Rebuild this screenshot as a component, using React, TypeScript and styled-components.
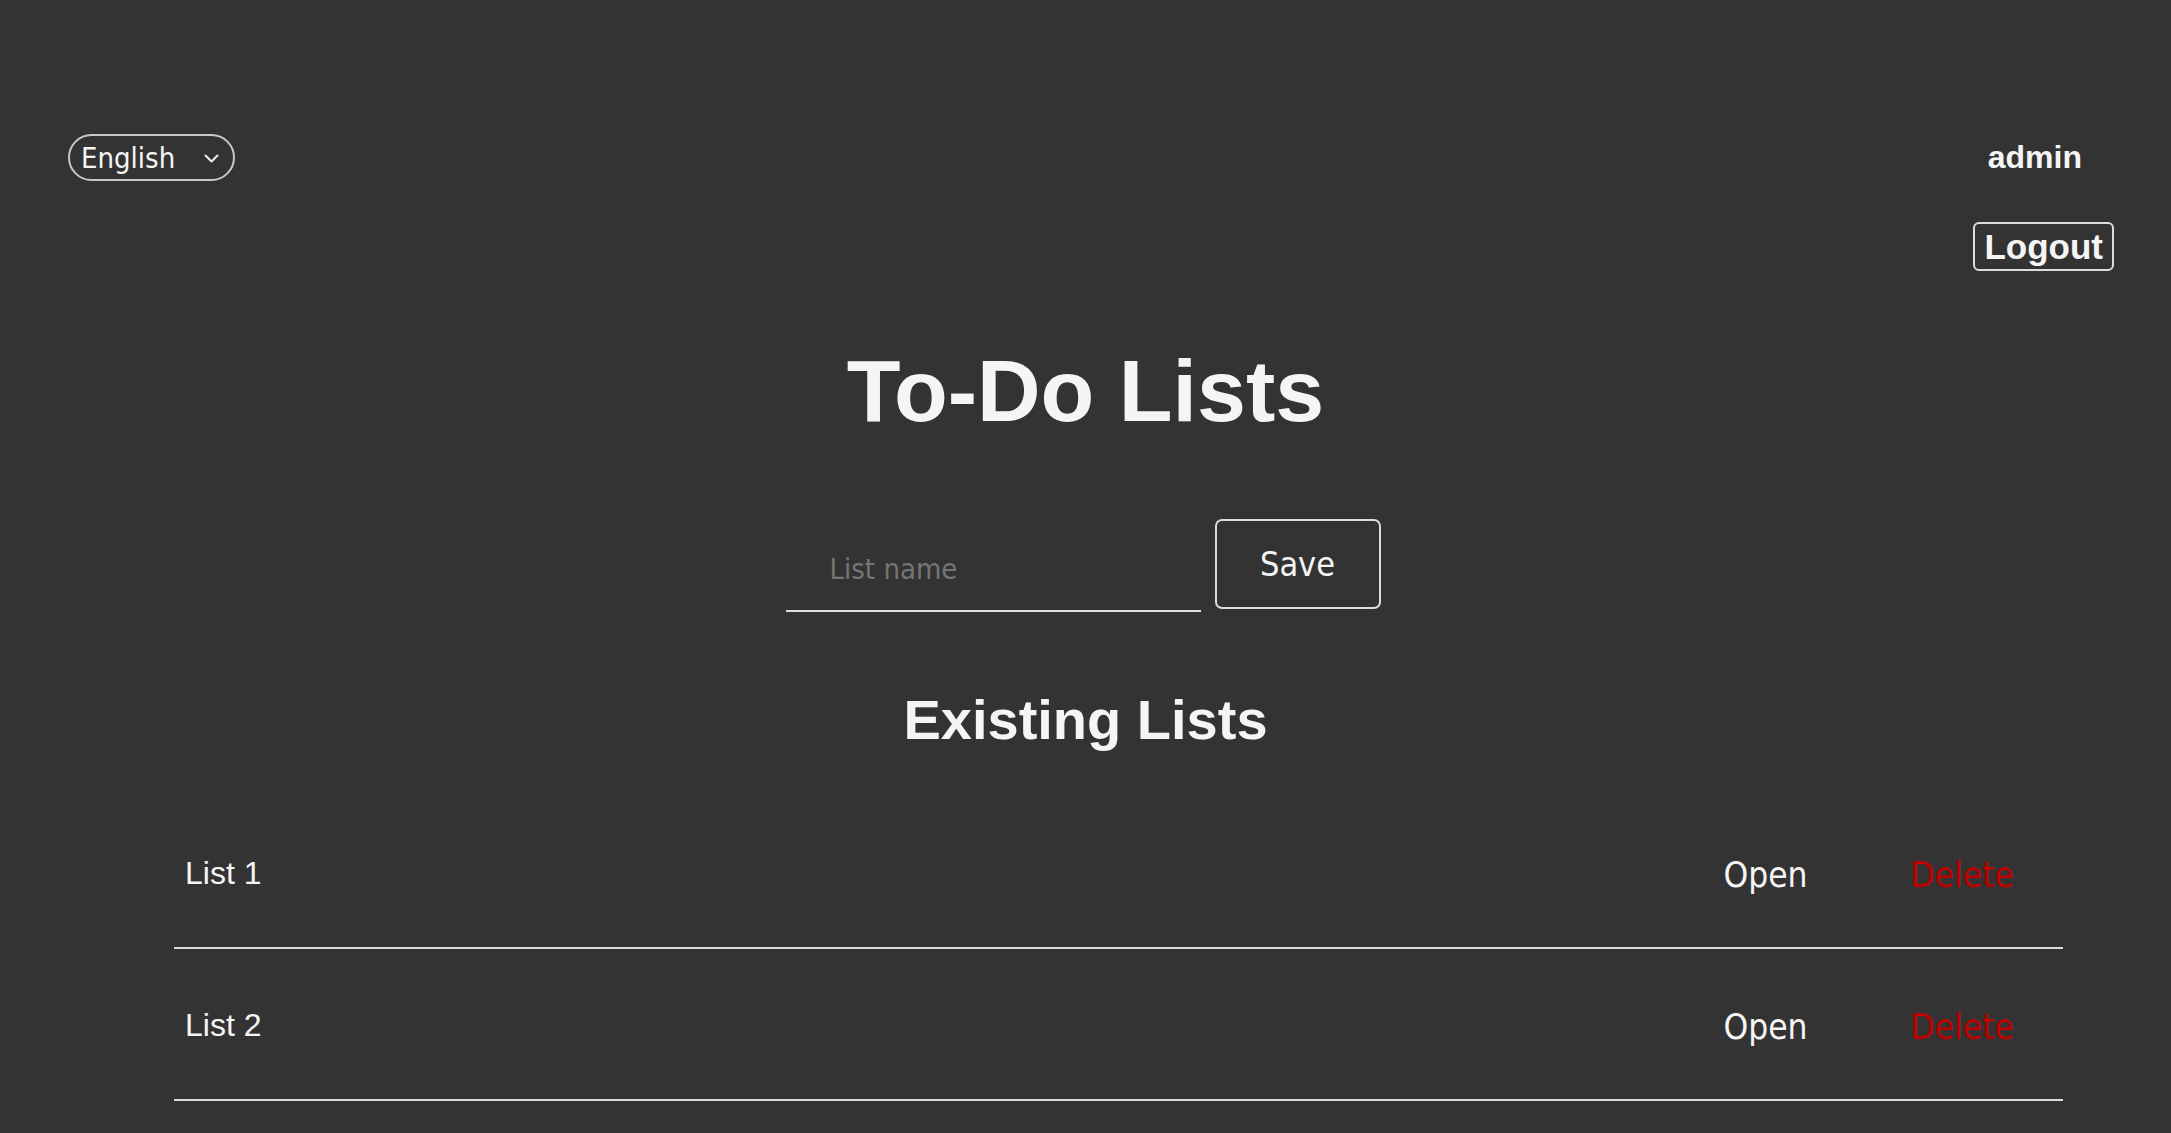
import { useState } from "react";
import styled, { createGlobalStyle } from "styled-components";

const GlobalStyle = createGlobalStyle`
  html, body {
    margin: 0;
    padding: 0;
    background: #333333;
  }
  body {
    font-family: "Liberation Sans", Arial, sans-serif;
    color: #f5f5f5;
  }
  * {
    box-sizing: border-box;
  }
`;

const UI_FONT = `"DejaVu Sans Condensed", "DejaVu Sans", Tahoma, sans-serif`;

const Page = styled.div`
  min-height: 100vh;
  background: #333333;
  overflow: hidden;
`;

/** HEADER */
const Header = styled.header`
  display: flex;
  justify-content: space-between;
  align-items: flex-start;
  padding: 134px 57px 0 68px;
`;

const SelectWrap = styled.div`
  position: relative;
  width: 167px;
  height: 47px;
`;

const LangSelect = styled.select`
  appearance: none;
  -webkit-appearance: none;
  width: 100%;
  height: 100%;
  padding: 0 0 0 11px;
  border: 2px solid #c8c8c8;
  border-radius: 24px;
  background: transparent;
  color: #f5f5f5;
  font-family: ${UI_FONT};
  font-size: 29px;
  outline: none;
  cursor: pointer;
`;

const Chevron = styled.svg`
  position: absolute;
  right: 16px;
  top: 20px;
  pointer-events: none;
`;

const UserBox = styled.div`
  display: flex;
  flex-direction: column;
  align-items: flex-end;
`;

const UserName = styled.span`
  margin-right: 32px;
  font-size: 32px;
  font-weight: bold;
  line-height: 46px;
`;

const LogoutButton = styled.button`
  margin-top: 42px;
  height: 49px;
  padding: 0 9px;
  border: 2px solid #dcdcdc;
  border-radius: 6px;
  background: transparent;
  color: #f5f5f5;
  font-family: "Liberation Sans", Arial, sans-serif;
  font-size: 35px;
  font-weight: bold;
  line-height: 43px;
  cursor: pointer;
`;

/** MAIN */
const Title = styled.h1`
  margin: 76px 0 0;
  text-align: center;
  font-size: 88px;
  line-height: 88px;
  font-weight: bold;
`;

const Form = styled.form`
  display: flex;
  justify-content: center;
  align-items: flex-start;
  gap: 14px;
  margin-top: 84px;
  padding-right: 5px;
`;

const NameInput = styled.input`
  width: 415px;
  height: 93px;
  padding: 8px 0 0 44px;
  border: none;
  border-bottom: 2px solid #dedede;
  background: transparent;
  color: #f5f5f5;
  font-family: ${UI_FONT};
  font-size: 29px;
  outline: none;

  ::placeholder {
    color: #a3a3a3;
  }
`;

const SaveButton = styled.button`
  width: 166px;
  height: 90px;
  border: 2px solid #dcdcdc;
  border-radius: 7px;
  background: transparent;
  color: #f5f5f5;
  font-family: ${UI_FONT};
  font-size: 34px;
  cursor: pointer;
`;

const SubTitle = styled.h2`
  margin: 80px 0 0;
  text-align: center;
  font-size: 56px;
  line-height: 56px;
  font-weight: bold;
`;

const ListWrap = styled.ul`
  list-style: none;
  margin: 49px 0 0;
  padding: 0 108px 0 174px;
`;

const Row = styled.li`
  display: flex;
  justify-content: space-between;
  align-items: flex-start;
  height: 152px;
  padding: 58px 49px 0 11px;
  border-bottom: 2px solid #dcdcdc;
`;

const RowName = styled.span`
  font-size: 32px;
  line-height: 36px;
`;

const Actions = styled.div`
  display: flex;
  gap: 103px;
`;

const TextButton = styled.button<{ danger?: boolean }>`
  padding: 0;
  border: none;
  background: transparent;
  color: ${(props) => (props.danger ? "#bf0000" : "#f5f5f5")};
  font-family: ${UI_FONT};
  font-size: 35px;
  line-height: 40px;
  cursor: pointer;
`;

const App = () => {
  const [lists, setLists] = useState(["List 1", "List 2"]);
  const [name, setName] = useState("");

  /** ON-SAVE */
  const onSubmit = (e: React.FormEvent) => {
    e.preventDefault();
    if (!name.trim()) return;
    setLists([...lists, name.trim()]);
    setName("");
  };

  return (
    <Page>
      <GlobalStyle />
      <Header>
        <SelectWrap>
          <LangSelect defaultValue="en">
            <option value="en">English</option>
            <option value="de">Deutsch</option>
          </LangSelect>
          <Chevron width="15" height="9" viewBox="0 0 15 9" fill="none">
            <path
              d="M1.5 1.5 L7.5 7.5 L13.5 1.5"
              stroke="#f0f0f0"
              strokeWidth="2"
              strokeLinecap="round"
              strokeLinejoin="round"
            />
          </Chevron>
        </SelectWrap>
        <UserBox>
          <UserName>admin</UserName>
          <LogoutButton>Logout</LogoutButton>
        </UserBox>
      </Header>

      <Title>To-Do Lists</Title>

      <Form onSubmit={onSubmit}>
        <NameInput
          placeholder="List name"
          value={name}
          onChange={(e) => setName(e.target.value)}
        />
        <SaveButton type="submit">Save</SaveButton>
      </Form>

      <SubTitle>Existing Lists</SubTitle>

      <ListWrap>
        {lists.map((item, i) => (
          <Row key={item + i}>
            <RowName>{item}</RowName>
            <Actions>
              <TextButton>Open</TextButton>
              <TextButton
                danger
                onClick={() => setLists(lists.filter((_, j) => j !== i))}
              >
                Delete
              </TextButton>
            </Actions>
          </Row>
        ))}
      </ListWrap>
    </Page>
  );
};

export default App;
